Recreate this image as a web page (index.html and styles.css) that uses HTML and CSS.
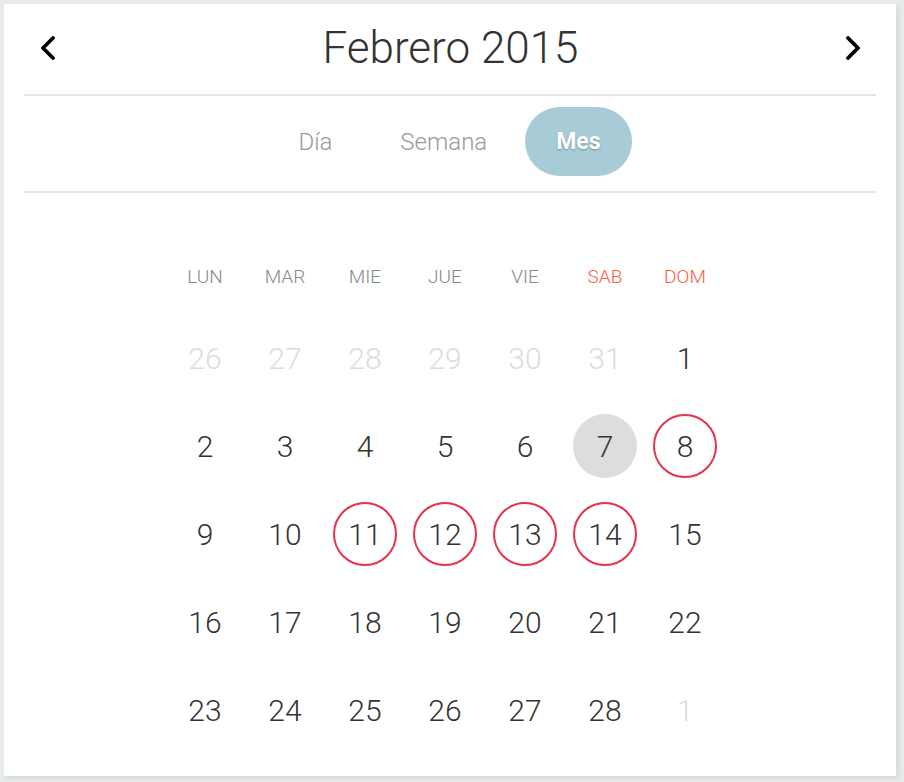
FILE: index.html
```html
<!DOCTYPE html>
<html lang="es">
<head>
<meta charset="utf-8">
<title>Febrero 2015</title>
<link rel="stylesheet" href="styles.css">
</head>
<body>
<div class="card">
  <header class="head">
    <button class="nav" aria-label="Anterior">
      <svg width="16" height="24" viewBox="0 0 16 24"><path d="M13 2 L3 12 L13 22" fill="none" stroke="#000" stroke-width="3.8" stroke-linecap="round" stroke-linejoin="round"/></svg>
    </button>
    <h1 class="title">Febrero 2015</h1>
    <button class="nav" aria-label="Siguiente">
      <svg width="16" height="24" viewBox="0 0 16 24"><path d="M3 2 L13 12 L3 22" fill="none" stroke="#000" stroke-width="3.8" stroke-linecap="round" stroke-linejoin="round"/></svg>
    </button>
  </header>
  <nav class="tabs">
    <span class="tab">Día</span>
    <span class="tab">Semana</span>
    <span class="tab active">Mes</span>
  </nav>
  <section class="cal">
    <div class="grid">
      <div class="wd">LUN</div><div class="wd">MAR</div><div class="wd">MIE</div><div class="wd">JUE</div><div class="wd">VIE</div><div class="wd we">SAB</div><div class="wd we">DOM</div>

      <div class="day"><span class="n out">26</span></div>
      <div class="day"><span class="n out">27</span></div>
      <div class="day"><span class="n out">28</span></div>
      <div class="day"><span class="n out">29</span></div>
      <div class="day"><span class="n out">30</span></div>
      <div class="day"><span class="n out">31</span></div>
      <div class="day"><span class="n">1</span></div>

      <div class="day"><span class="n">2</span></div>
      <div class="day"><span class="n">3</span></div>
      <div class="day"><span class="n">4</span></div>
      <div class="day"><span class="n">5</span></div>
      <div class="day"><span class="n">6</span></div>
      <div class="day"><span class="n today">7</span></div>
      <div class="day"><span class="n mark">8</span></div>

      <div class="day"><span class="n">9</span></div>
      <div class="day"><span class="n">10</span></div>
      <div class="day"><span class="n mark">11</span></div>
      <div class="day"><span class="n mark">12</span></div>
      <div class="day"><span class="n mark">13</span></div>
      <div class="day"><span class="n mark">14</span></div>
      <div class="day"><span class="n">15</span></div>

      <div class="day"><span class="n">16</span></div>
      <div class="day"><span class="n">17</span></div>
      <div class="day"><span class="n">18</span></div>
      <div class="day"><span class="n">19</span></div>
      <div class="day"><span class="n">20</span></div>
      <div class="day"><span class="n">21</span></div>
      <div class="day"><span class="n">22</span></div>

      <div class="day"><span class="n">23</span></div>
      <div class="day"><span class="n">24</span></div>
      <div class="day"><span class="n">25</span></div>
      <div class="day"><span class="n">26</span></div>
      <div class="day"><span class="n">27</span></div>
      <div class="day"><span class="n">28</span></div>
      <div class="day"><span class="n out">1</span></div>
    </div>
  </section>
</div>
</body>
</html>
```
FILE: styles.css
```css
* { box-sizing: border-box; }
html, body { margin: 0; }
body {
  background: #e8ebeb;
  padding: 4px 8px 6px 4px;
  font-family: Roboto, "Liberation Sans", sans-serif;
  color: #333;
}
.card {
  background: #fff;
  height: 772px;
  padding: 0 20px;
  box-shadow: 3px 3px 4px rgba(0, 0, 0, 0.07);
  overflow: hidden;
}
.head {
  height: 92px;
  display: flex;
  align-items: center;
  justify-content: space-between;
  padding: 0 11px 2px 12px;
  border-bottom: 2px solid #e3e6e8;
}
.nav {
  background: none;
  border: 0;
  padding: 0;
  width: 24px;
  height: 30px;
  display: flex;
  align-items: center;
  justify-content: center;
}
.title {
  margin: 0;
  font-weight: 300;
  font-size: 44px;
  color: #333;
  line-height: 1;
}
.tabs {
  display: flex;
  justify-content: center;
  gap: 8px;
  padding: 11px 0 15px;
  border-bottom: 2px solid #e3e6e8;
}
.tab {
  height: 69px;
  padding: 0 30px;
  border-radius: 35px;
  display: flex;
  align-items: center;
  font-size: 24px;
  font-weight: 300;
  color: #999;
}
.tab.active {
  background: #a7ccd7;
  color: #fff;
  font-weight: 700;
  font-size: 23px;
  padding: 0 31px;
  text-shadow: 0 1px 2px rgba(0, 0, 0, 0.3);
}
.cal {
  display: flex;
  justify-content: center;
  padding: 62px 10px 0 0;
}
.grid {
  display: grid;
  grid-template-columns: repeat(7, 80px);
  grid-template-rows: 59px repeat(5, 88px);
}
.wd {
  display: flex;
  align-items: flex-start;
  justify-content: center;
  padding-top: 10px;
  font-size: 19px;
  font-weight: 300;
  color: #888;
}
.wd.we { color: #ff5a45; }
.day {
  display: flex;
  align-items: center;
  justify-content: center;
}
.n {
  width: 64px;
  height: 64px;
  border-radius: 50%;
  display: flex;
  align-items: center;
  justify-content: center;
  font-size: 30px;
  font-weight: 300;
  color: #333;
}
.n.out { color: #dcdcdc; }
.n.today { background: #dddddd; }
.n.mark { border: 2px solid #e5334b; }
```
